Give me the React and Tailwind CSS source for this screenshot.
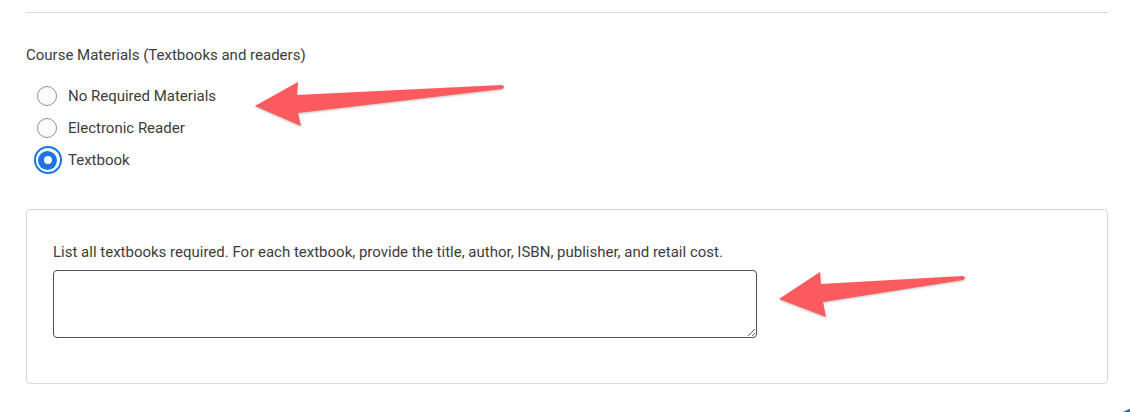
import React from "react";

function Radio({ checked, label }) {
  return (
    <label className="flex items-center h-8 cursor-pointer">
      <span className="w-[42px] flex items-center justify-center">
        {checked ? (
          <span className="ml-[1px] w-[28px] h-[28px] rounded-full border-[2.5px] border-[#1a73e8] flex items-center justify-center">
            <span className="w-[19px] h-[19px] rounded-full bg-[#1a73e8] flex items-center justify-center">
              <span className="w-[8px] h-[8px] rounded-full bg-white" />
            </span>
          </span>
        ) : (
          <span className="w-[20px] h-[20px] rounded-full border-[1.5px] border-[#8a8f97] bg-white" />
        )}
      </span>
      <span className="text-[15px] text-[#3c3c3c] leading-5">{label}</span>
    </label>
  );
}

export default function App() {
  return (
    <div
      className="relative w-[1130px] h-[412px] bg-white overflow-hidden"
      style={{ fontFamily: "Roboto, 'Liberation Sans', sans-serif" }}
    >
      <div className="ml-[26px] w-[1082px] pt-[12px]">
        <div className="border-t border-[#d6dae0]" />
        <div className="mt-[32px] text-[15px] leading-5 text-[#3c3c3c]">
          Course Materials (Textbooks and readers)
        </div>
        <div className="mt-[15px] flex flex-col">
          <Radio label="No Required Materials" />
          <Radio label="Electronic Reader" />
          <Radio checked label="Textbook" />
        </div>
        <div className="mt-[33px] h-[175px] border border-[#d5d9df] rounded-[4px] pl-[26px] pt-[32px]">
          <div className="text-[15px] leading-5 text-[#3c3c3c]">
            List all textbooks required. For each textbook, provide the title, author, ISBN, publisher, and retail cost.
          </div>
          <textarea className="mt-[8px] block w-[704px] h-[68px] border border-[#4b525b] rounded-[4px] resize-y outline-none" />
        </div>
      </div>

      <svg
        className="absolute left-0 top-0 pointer-events-none"
        width="1130"
        height="412"
        style={{ filter: "drop-shadow(0px 1px 1px rgba(0,0,0,0.25))" }}
      >
        <path
          d="M255 106 L298 82 L297 95 L502 85 Q506 87 502 89 L298 113 L301 126 Z"
          fill="#fb5a5f"
          strokeLinejoin="round"
        />
        <path
          d="M779 299 L820 272 L821 284 L963 276 Q967 278 963 280 L823 302 L826 317 Z"
          fill="#fb5a5f"
          strokeLinejoin="round"
        />
      </svg>

      <div className="absolute left-[1114px] top-[408px] w-[44px] h-[44px] rounded-full bg-[#1d6fd6]" />
    </div>
  );
}
